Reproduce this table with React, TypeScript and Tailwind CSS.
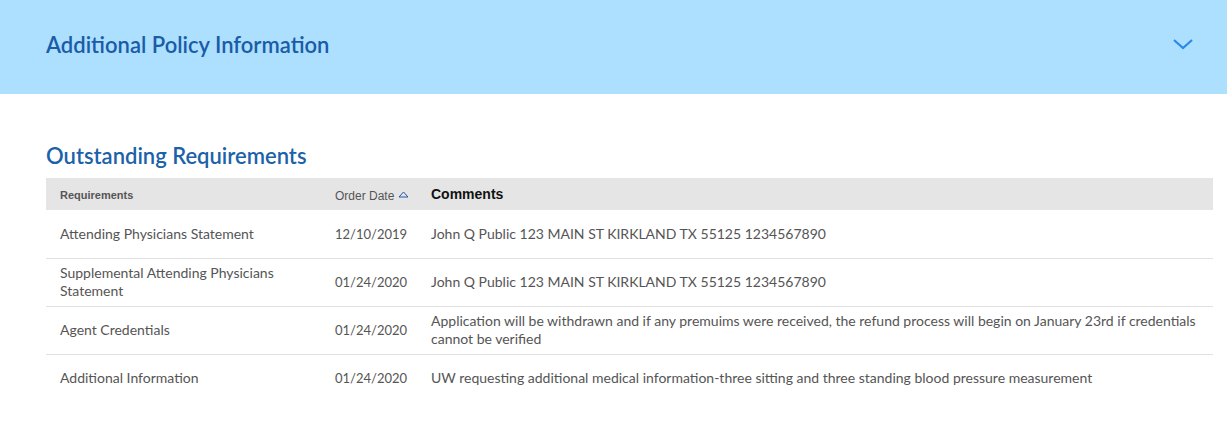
import React from 'react'

interface Requirement {
  id: number
  name: string
  orderDate: string
  comments: string
}

const requirements: Requirement[] = [
  {
    id: 1,
    name: 'Attending Physicians Statement',
    orderDate: '12/10/2019',
    comments: 'John Q Public 123 MAIN ST KIRKLAND TX 55125 1234567890',
  },
  {
    id: 2,
    name: 'Supplemental Attending Physicians Statement',
    orderDate: '01/24/2020',
    comments: 'John Q Public 123 MAIN ST KIRKLAND TX 55125 1234567890',
  },
  {
    id: 3,
    name: 'Agent Credentials',
    orderDate: '01/24/2020',
    comments:
      'Application will be withdrawn and if any premuims were received, the refund process will begin on January 23rd if credentials cannot be verified',
  },
  {
    id: 4,
    name: 'Additional Information',
    orderDate: '01/24/2020',
    comments: 'UW requesting additional medical information-three sitting and three standing blood pressure measurement',
  },
]

const App: React.FC = () => {
  return (
    <div className="min-h-[425px] bg-white font-['Lato',sans-serif]">
      <div className="h-[94px] bg-[#addfff] flex items-center justify-between pl-[46px] pr-[33px]">
        <h1 className="text-[22px] font-semibold text-[#1a5ca6] pb-[5px]">Additional Policy Information</h1>
        <svg width="22" height="14" viewBox="0 0 22 14" fill="none" className="mb-[6px]">
          <path d="M2 3l9 8 9-8" stroke="#2a8ae6" strokeWidth="2.2" />
        </svg>
      </div>

      <section className="pl-[46px] pr-[14px] pt-[49px]">
        <h2 className="text-[22px] font-semibold text-[#1b62a8] leading-[26px] mb-[9px]">Outstanding Requirements</h2>
        <table className="w-full table-fixed border-collapse">
          <thead>
            <tr className="bg-[#e5e5e5] h-[32px] font-['Liberation_Sans',Arial,sans-serif]">
              <th className="w-[289px] pl-[14px] pt-[3px] text-left text-[11px] font-bold text-[#555]">Requirements</th>
              <th className="w-[96px] pt-[3px] text-left text-[12px] font-normal text-[#555]">
                <span className="inline-flex items-center gap-[4px]">
                  Order Date
                  <svg width="11" height="7" viewBox="0 0 11 7" fill="none" className="mb-[3px]">
                    <path d="M1 6L5.5 1 10 6z" stroke="#2457a8" strokeWidth="1" fill="none" />
                  </svg>
                </span>
              </th>
              <th className="pt-[1px] text-left text-[14px] font-bold text-[#111]">Comments</th>
            </tr>
          </thead>
          <tbody>
            {requirements.map((r) => (
              <tr
                key={r.id}
                className="h-[48px] border-b border-[#e2e2e2] last:border-b-0 text-[14px] leading-[18px] text-[#555]"
              >
                <td className="pl-[14px] pr-[20px]">{r.name}</td>
                <td className="text-[13px]">{r.orderDate}</td>
                <td className="pr-[2px]">{r.comments}</td>
              </tr>
            ))}
          </tbody>
        </table>
      </section>
    </div>
  )
}

export default App
